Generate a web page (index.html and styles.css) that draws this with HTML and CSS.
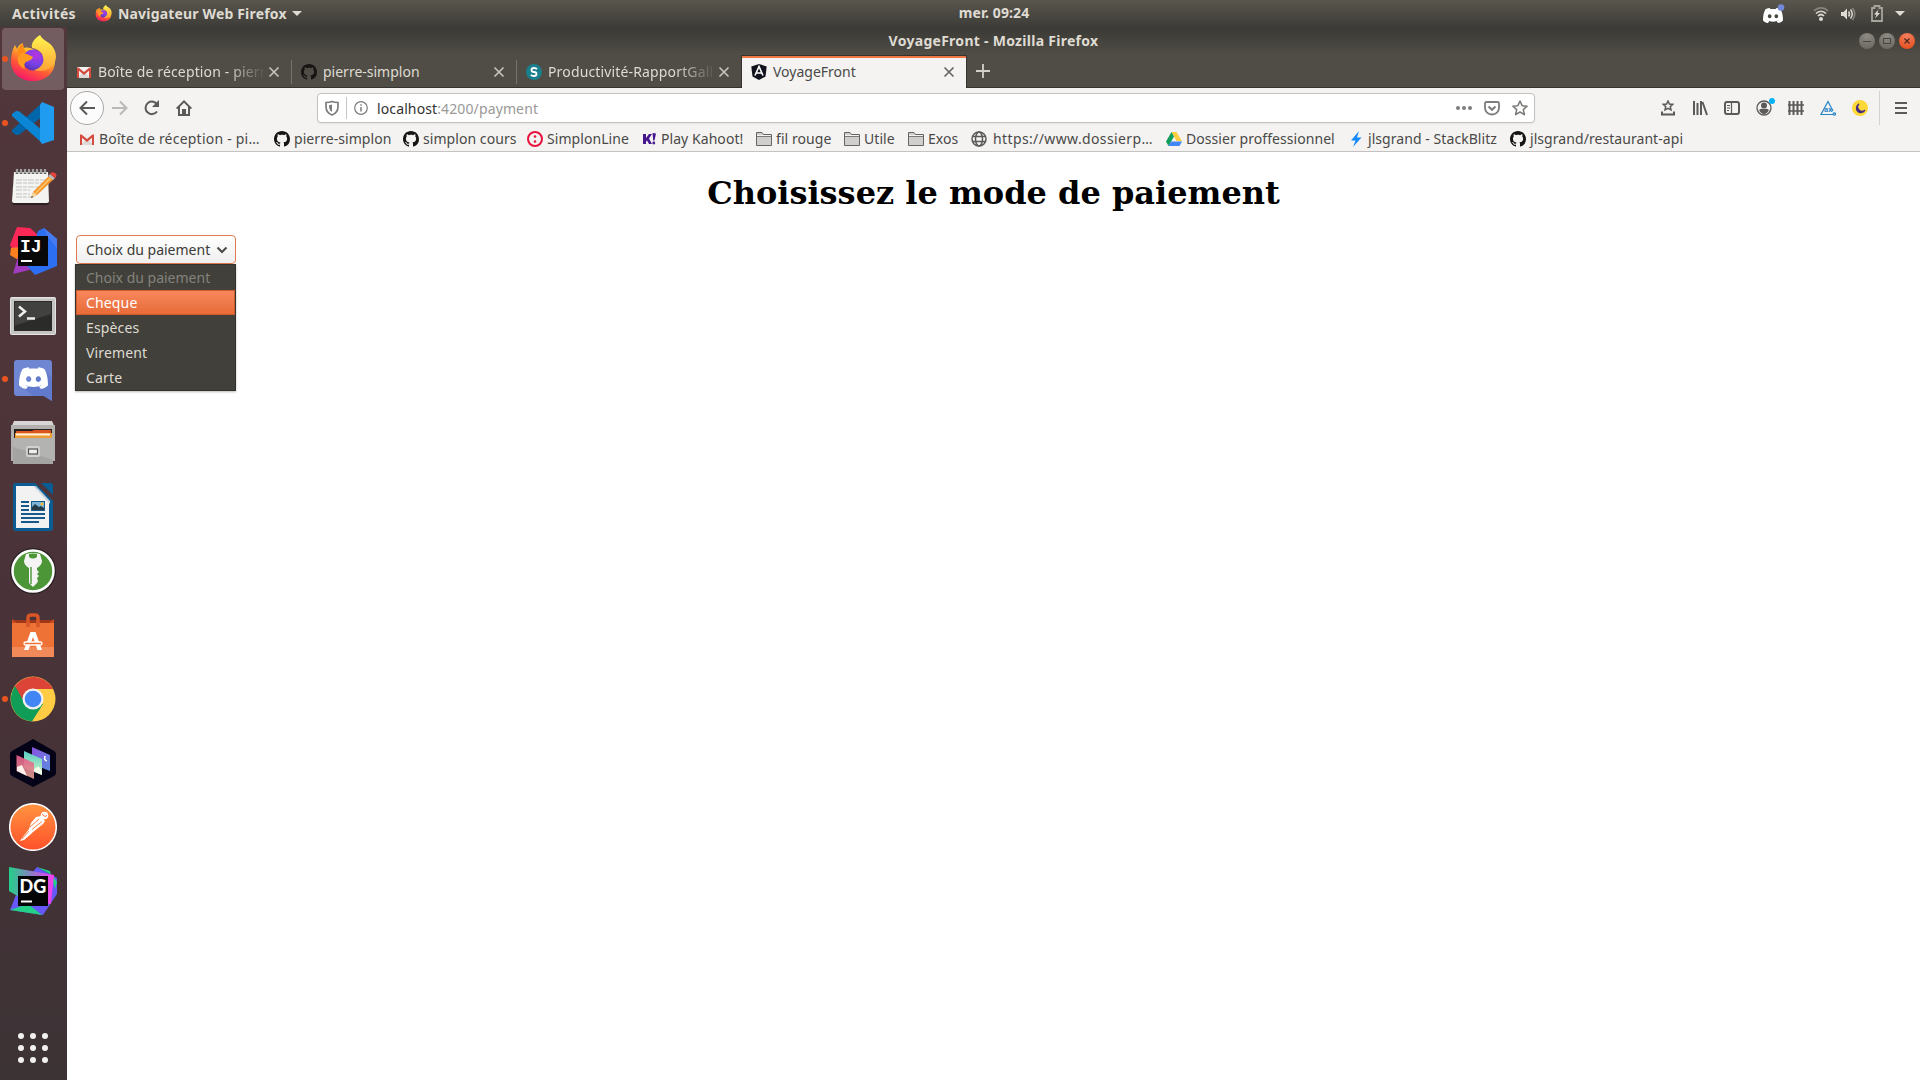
FILE: index.html
```html
<!DOCTYPE html>
<html lang="fr">
<head>
<meta charset="utf-8">
<title>VoyageFront</title>
<link rel="stylesheet" href="styles.css">
</head>
<body>
<svg class="defs" width="0" height="0" aria-hidden="true">
  <defs>
    <linearGradient id="ffBody" x1=".8" y1="0" x2=".3" y2="1"><stop offset="0" stop-color="#fff44f"/><stop offset=".35" stop-color="#ffb32c"/><stop offset=".65" stop-color="#ff5a36"/><stop offset="1" stop-color="#f5156c"/></linearGradient>
    <linearGradient id="ffFlame" x1="0" y1="0" x2="0" y2="1"><stop offset="0" stop-color="#fff44f"/><stop offset="1" stop-color="#ffa436"/></linearGradient>
    <radialGradient id="ffGlobe" cx=".65" cy=".25" r=".8"><stop offset="0" stop-color="#b833e1"/><stop offset=".6" stop-color="#7542e5"/><stop offset="1" stop-color="#5b2fb0"/></radialGradient>
    <symbol id="firefox" viewBox="0 0 48 48">
      <path d="M4 14l2-4 2 4c1-3 3-5 6-6c0 2 0 3 1 5c4-1 7 0 11 2l7 5l8-6c3 4 5 8 5 12c0 12-9 20-22 20S2 38 2 26c0-5 1-8 2-12z" fill="url(#ffBody)"/>
      <circle cx="24" cy="25" r="10.500" fill="url(#ffGlobe)"/>
      <path d="M31 0c-6 4-9 8-8 13c7 1 12 6 12 12c-1 5-5 9-10 10c10 3 21-1 22-13c0-6-3-11-7-14c-3-2-7-4-9-8z" fill="url(#ffFlame)"/>
      <path d="M9 22c2-4 6-4 9-3c2 1 4 2 6 3c-1 3-5 4-7 5c-2 1-2 4-1 7c-5-2-8-6-7-12z" fill="#ff9a21"/>
      <path d="M14 8c-4 3-6 7-5 14c2-4 5-5 8-4c-2-3-3-6-3-10z" fill="#ff8a16"/>
    </symbol>
    <symbol id="github" viewBox="0 0 16 16"><path fill="#161514" fill-rule="evenodd" d="M8 0C3.58 0 0 3.58 0 8c0 3.54 2.29 6.53 5.47 7.59.4.07.55-.17.55-.38 0-.19-.01-.82-.01-1.49-2.01.37-2.53-.49-2.69-.94-.09-.23-.48-.94-.82-1.13-.28-.15-.68-.52-.01-.53.63-.01 1.08.58 1.23.82.72 1.21 1.87.87 2.33.66.07-.52.28-.87.51-1.07-1.78-.2-3.64-.89-3.64-3.95 0-.87.31-1.59.82-2.15-.08-.2-.36-1.02.08-2.12 0 0 .67-.21 2.2.82.64-.18 1.32-.27 2-.27s1.36.09 2 .27c1.53-1.04 2.2-.82 2.2-.82.44 1.1.16 1.92.08 2.12.51.56.82 1.27.82 2.15 0 3.07-1.87 3.75-3.65 3.95.29.25.54.73.54 1.48 0 1.07-.01 1.93-.01 2.2 0 .21.15.46.55.38A8.01 8.01 0 0 0 16 8c0-4.42-3.58-8-8-8z"/></symbol>
    <symbol id="gmail" viewBox="0 0 16 16"><path d="M1 3h14v11H1z" fill="#f3f1f0"/><path d="M3 12l5-4 5 4v2H3z" fill="#dcd9d8"/><path d="M1 14V3.500h1.500L8 8l5.500-4.500H15V14h-2V6.800L8 11 3 6.800V14z" fill="#d54c3f"/></symbol>
    <symbol id="folder" viewBox="0 0 16 16"><path d="M.5 14.500V1.500H6l1.500 2h8v11z" fill="#d0cfcd" stroke="#66645f"/><path d="M1 4.500h14" stroke="#f4f3f2"/><path d="M1 5.500h14" stroke="#66645f" stroke-width=".8"/></symbol>
    <symbol id="close" viewBox="0 0 12 12"><path d="M1.500 1.500l9 9M10.500 1.500l-9 9" stroke="currentColor" stroke-width="1.600" fill="none"/></symbol>
    <symbol id="discord" viewBox="0 0 24 18"><path fill="#fff" fill-rule="evenodd" d="M8 0C5 .4 3 1.500 3 1.500C1 5 0 9 0 15c2 2.500 5 3 6 3l1.500-2.200C6 15.500 5 14.500 5 14.500c4 2.500 10 2.500 14 0c0 0-1 1-2.500 1.300L18 18c1 0 4-.5 6-3c0-6-1-10-3-13.500C21 1.500 19 .4 16 0l-.7 1.300C13 1 11 1 8.700 1.300zM8 7.500a2.200 2.400 0 1 0 .01 0zm8 0a2.200 2.400 0 1 0 .01 0z"/></symbol>
    <radialGradient id="btnGrey" cx=".5" cy=".2" r=".8"><stop offset="0" stop-color="#8d8b84"/><stop offset="1" stop-color="#6b6962"/></radialGradient>
    <radialGradient id="btnRed" cx=".5" cy=".2" r=".8"><stop offset="0" stop-color="#f58061"/><stop offset="1" stop-color="#e4501f"/></radialGradient>
  </defs>
</svg>

<header class="topbar">
  <div class="topbar-left">
    <span class="activities">Activités</span>
    <svg width="17" height="17"><use href="#firefox"/></svg>
    <span class="app-name">Navigateur Web Firefox</span>
    <svg class="caret" width="10" height="5"><path d="M0 0h10L5 5z" fill="#dfdbd2"/></svg>
  </div>
  <span class="clock">mer. 09:24</span>
  <div class="tray">
    <svg class="tray-discord" width="22" height="20" viewBox="0 0 22 20"><use href="#discord" x="0" y="4" width="20" height="15"/><circle cx="18" cy="3.500" r="3.300" fill="#7289da"/></svg>
    <svg class="tray-wifi" width="16" height="16" viewBox="0 0 16 16" fill="none" stroke-width="1.700"><path d="M1 5c4-4.300 10-4.300 14 0" stroke="#86847d"/><path d="M3 7.500c3-3 7-3 10 0M5 10c2-2 4-2 6 0" stroke="#dfdbd2"/><circle cx="8" cy="13" r="2" fill="#dfdbd2"/></svg>
    <svg class="tray-sound" width="16" height="16" viewBox="0 0 16 16" fill="none" stroke="#dfdbd2" stroke-width="1.500"><path d="M1 6h2.500L7 2.500v11L3.500 10H1z" fill="#dfdbd2" stroke="none"/><path d="M8.500 5.500q2 2.500 0 5M10.500 3.500q3.500 4.500 0 9"/><path d="M12.500 2q4.500 6 0 12" stroke="#86847d"/></svg>
    <svg class="tray-battery" width="12" height="17" viewBox="0 0 12 17"><path d="M1 3h2.500V1h5v2H11v13H1z" fill="none" stroke="#a7a49c" stroke-width="1.800"/><path d="M7.500 4.500L3 9.500h2.500L4 13.500l5-5.500H6.500z" fill="#dfdbd2"/></svg>
    <svg width="10" height="5"><path d="M0 0h10L5 5z" fill="#dfdbd2"/></svg>
  </div>
</header>

<div class="workspace">
<nav class="dock">
  <div class="dock-item active running"><svg width="48" height="48"><use href="#firefox"/></svg></div>
  <div class="dock-item running"><svg width="48" height="48" viewBox="0 0 48 48"><path d="M33 4L3 31v2l4 3 3-.2L33 18z" fill="#0065a9"/><path d="M33 44L3 17v-2l4-3 3 .2L33 31z" fill="#0a86d4"/><path d="M33 3l12 5v33l-12 4-2-3V6z" fill="#1f9cf0"/></svg></div>
  <div class="dock-item"><svg width="48" height="48" viewBox="0 0 48 48"><path d="M5 11h34l1 29q0 2-2 2H5q-2 0-2-2z" fill="#2d2024"/><path d="M5 9h34l1 29q0 2-2 2H5q-2 0-2-2z" fill="#f4f4f2"/><path d="M7 17h30M7 20h28M7 24h22M7 27h14M7 31h14M7 34h18" stroke="#c3c3c3" stroke-dasharray="6 1 4 1"/><path d="M8 6v5M12 6v5M16 6v5M20 6v5M24 6v5M28 6v5M32 6v5M36 6v5" stroke="#666" stroke-width="2.600"/><path d="M8 6v4M12 6v4M16 6v4M20 6v4M24 6v4M28 6v4M32 6v4M36 6v4" stroke="#ddd"/><path d="M24 29L41 12l4 4-17 16-6 3z" fill="#f1922c"/><path d="M25.500 30L42 13l1.500 1.500L27 31z" fill="#ffc05a"/><path d="M24 29l4 3-6 3z" fill="#f3d9a8"/><path d="M22 35l1-2 1 1z" fill="#222"/><path d="M39 13l2-2 5 4-2 2z" fill="#b8b8b8"/><path d="M41 11c1-2 3-2 5-1s2 4 0 5z" fill="#e2453a"/></svg></div>
  <div class="dock-item"><svg width="48" height="48" viewBox="0 0 48 48"><path d="M8 0l13 1 8 7v12L10 36 1 18z" fill="#fe2857"/><path d="M2 21l9-1v14l-10-6z" fill="#fc801d"/><path d="M10 26L4 47l24-6z" fill="#a13bbf"/><path d="M29 4l6-3 13 11v27L26 48l-8-9z" fill="#2d6ff2"/><path d="M35 1l13 11v9L38 9z" fill="#477cf0"/><path d="M9 9h30v30H9z" fill="#080808"/><path d="M12 34h11" stroke="#fff" stroke-width="2"/><text x="11" y="25" class="logo-mono" fill="#fff">IJ</text></svg></div>
  <div class="dock-item"><svg width="48" height="48" viewBox="0 0 48 48"><rect x="1" y="6" width="46" height="38" rx="2" fill="#e4e4e2"/><rect x="2" y="7.500" width="44" height="35.500" rx="1" fill="#c4c4c2"/><rect x="5" y="10" width="38" height="30" fill="#2b2b2a"/><path d="M6 11h36v12L6 34.500z" fill="#414140"/><path d="M10 15.500l6 5-6 5" fill="none" stroke="#eee" stroke-width="2.500"/><path d="M18 27.500h8" stroke="#eee" stroke-width="2.500"/></svg></div>
  <div class="dock-item running"><svg width="48" height="48" viewBox="0 0 48 48"><path d="M8 5h32q3 0 3 3v38l-8-5H8q-3 0-3-3V8q0-3 3-3z" fill="#6f86d2"/><path d="M36 16l7 7v23l-8-5H24L13 32z" fill="#617acb"/><use href="#discord" x="10" y="12" width="29" height="22"/></svg></div>
  <div class="dock-item"><svg width="48" height="48" viewBox="0 0 48 48"><path d="M5 2h38l3 7H2z" fill="#d8d5d7"/><path d="M2 6h44v36H2z" fill="#b2b0ae"/><path d="M5 10h38v9H5z" fill="#24211f"/><path d="M7 12h16l2-1h17v8H7z" fill="#d9541e"/><path d="M6 14h37v5H6z" fill="#ef9b35"/><path d="M7 15.500h34" stroke="#fff2dc" stroke-width="2"/><path d="M4 19h40v26H4z" fill="#a4a4a2"/><path d="M4 19h40v22L4 28z" fill="#b3b3b1"/><rect x="17" y="27" width="14" height="11" rx="2" fill="#d2d2d0"/><rect x="19.500" y="30" width="9" height="5" fill="#eee" stroke="#555" stroke-width="1.200"/></svg></div>
  <div class="dock-item"><svg width="48" height="48" viewBox="0 0 48 48"><path d="M6 0h20l18 18v27q0 3-3 3H7q-3 0-3-3V3q0-3 2-3z" fill="#0b5c93"/><path d="M32 0h9q3 0 3 3v9z" fill="#0b5c93"/><path d="M7 3h18l15 16v26H7z" fill="#f2f2f2"/><path d="M25 3h2l14 15v3z" fill="#c9d3da"/><path d="M12 19h8M12 23h8M12 27h8M12 31h24M12 35h24M12 39h18" stroke="#165a8b" stroke-width="2"/><path d="M22 18h14v10H22z" fill="#165a8b"/><path d="M23 19h12v8H23z" fill="#7bb5d8"/><path d="M23 27v-3l3-3 4 3 2-1 3 2v2z" fill="#253b46"/><circle cx="33" cy="21" r="1.500" fill="#fdbb30"/></svg></div>
  <div class="dock-item"><svg width="48" height="48" viewBox="0 0 48 48"><circle cx="24" cy="24" r="23" fill="#241d1f"/><circle cx="24" cy="24" r="20.500" fill="#4c9637" stroke="#fff" stroke-width="2.500"/><path fill-rule="evenodd" fill="#f4f4f4" d="M17 7q7-2 14 0l2 7q0 4-5 7v2l2 2-2 2 2 2-2 2 1 3-1 2-4 4-4-4V21q-5-3-5-7zM20 7q4-1 8 0v3q-4 3-8 0z"/><path d="M22 20v17" stroke="#579b42" stroke-width="1.500"/></svg></div>
  <div class="dock-item"><svg width="48" height="48" viewBox="0 0 48 48"><path d="M3 9h42v8H3z" fill="#9f3618"/><path d="M3 8l5 4h32l5-4v6H3z" fill="#c94b20"/><path d="M3 12h42v34H3z" fill="#ee7236"/><path d="M3 36h42v10H3z" fill="#f18a58"/><path d="M19 16V7q0-3 3-3h4q3 0 3 3v9" fill="none" stroke="#d85526" stroke-width="3.500"/><path d="M15 39l6.500-18h5L33 39h-4.500L24 26l-4.500 13z" fill="#fff"/><rect x="15" y="31" width="18" height="3" rx="1.500" fill="#ee7236" stroke="#fff" stroke-width="1.300"/></svg></div>
  <div class="dock-item running"><svg width="48" height="48" viewBox="0 0 48 48"><circle cx="24" cy="24" r="22.500" fill="#fc4"/><path d="M24 24L6 11A22.500 22.500 0 0 0 23 46.500L34 29z" fill="#0f9d58"/><path d="M24 14h20A22.500 22.500 0 0 0 6 11l8 14z" fill="#db4437"/><circle cx="24" cy="24" r="10.500" fill="#f1f1f1"/><circle cx="24" cy="24" r="8.300" fill="#4285f4"/></svg></div>
  <div class="dock-item"><svg width="48" height="48" viewBox="0 0 48 48"><defs><linearGradient id="panelA" x2="1" y2="1"><stop stop-color="#8a51e0"/><stop offset="1" stop-color="#5c8de0"/></linearGradient><linearGradient id="panelB" x2="0" y2="1"><stop stop-color="#58cfc6"/><stop offset="1" stop-color="#cdf0c0"/></linearGradient><linearGradient id="panelC" x2="0" y2="1"><stop stop-color="#e8588c"/><stop offset="1" stop-color="#d9a08c"/></linearGradient></defs><path d="M24 0l21 12q2 1 2 3v19q0 2-2 3L24 48 3 37q-2-1-2-3V15q0-2 2-3z" fill="#030216"/><path d="M23 8l18 8v16l-18-7z" fill="url(#panelA)"/><path d="M36 17q-1 4 2 5-4 0-2-5z" fill="#fff" stroke="#fff"/><path d="M15 12l18 8v16l-18-7z" fill="url(#panelB)"/><path d="M24 32q4-5 6-4l3 4v4z" fill="#f4faea"/><path d="M7.500 16L25 24v16L7.500 32z" fill="url(#panelC)" fill-opacity=".93"/><path d="M8 28l5-2 5 11-10-5z" fill="#fff0ec"/></svg></div>
  <div class="dock-item"><svg width="48" height="48" viewBox="0 0 48 48"><defs><linearGradient id="pm" x2="0" y2="1"><stop stop-color="#ff9440"/><stop offset="1" stop-color="#ff502a"/></linearGradient></defs><circle cx="24" cy="24" r="23.300" fill="url(#pm)" stroke="#fff" stroke-width="1.500"/><circle cx="35.500" cy="12.500" r="3.800" fill="#fff"/><path d="M27 14l5-1 4 5-2 3-10 8-3 3-6 5-4 1 2-3 7-9 2-6z" fill="#fff"/><path d="M30 16l-9 8M33 18.500l-10 8M20 28l-7 8" stroke="#ff7437" stroke-width=".9"/><path d="M33 11l3 2.500 2-1" stroke="#ff7437" fill="none"/></svg></div>
  <div class="dock-item"><svg width="48" height="48" viewBox="0 0 48 48"><defs><linearGradient id="dg"><stop stop-color="#22d088"/><stop offset=".55" stop-color="#9775cc"/><stop offset="1" stop-color="#fb3bec"/></linearGradient></defs><path d="M28 0l20 11v16l-14 21L1 43l8-20z" fill="#6657f8"/><path d="M28 0l13 4 5 18 2-7-5-7z" fill="#22d088"/><path d="M1 43l18-6 14 11z" fill="#22d088"/><path d="M0 0l45 8-3 29-25-3L0 24z" fill="url(#dg)"/><path d="M9 9h30v30H9z" fill="#050505"/><path d="M12 34.500h11" stroke="#fff" stroke-width="2"/><text x="10.500" y="25.500" class="logo-sans" fill="#fff">DG</text></svg></div>
  <div class="dock-apps"><i></i><i></i><i></i><i></i><i></i><i></i><i></i><i></i><i></i></div>
</nav>

<section class="window">
  <div class="titlebar">
    <span class="window-title">VoyageFront - Mozilla Firefox</span>
    <div class="window-buttons">
      <svg width="16" height="16"><circle cx="8" cy="8" r="8" fill="url(#btnGrey)"/><path d="M4 8.500h8" stroke="#45443f"/></svg>
      <svg width="16" height="16"><circle cx="8" cy="8" r="8" fill="url(#btnGrey)"/><path d="M4.500 5.500h7v5h-7z" fill="none" stroke="#45443f"/></svg>
      <svg width="16" height="16"><circle cx="8" cy="8" r="8" fill="url(#btnRed)"/><path d="M5.500 5.500l5 5M10.500 5.500l-5 5" stroke="#53291c" stroke-width="1.300"/></svg>
    </div>
  </div>
  <div class="tabs">
    <div class="tab"><svg width="16" height="16"><use href="#gmail"/></svg><span class="tab-label fade">Boîte de réception - pierr</span><svg class="tab-close" width="12" height="12"><use href="#close"/></svg></div>
    <div class="tab"><svg width="16" height="16"><use href="#github"/></svg><span class="tab-label">pierre-simplon</span><svg class="tab-close" width="12" height="12"><use href="#close"/></svg></div>
    <div class="tab"><svg width="16" height="16" viewBox="0 0 16 16"><circle cx="8" cy="8" r="8" fill="#1a7f8c"/><path d="M11 5.200Q10 4 8 4 5.500 4 5.500 6T8 8t2.500 2T8 12Q6 12 4.800 10.800" fill="none" stroke="#fff" stroke-width="1.800"/></svg><span class="tab-label fade">Productivité-RapportGall</span><svg class="tab-close" width="12" height="12"><use href="#close"/></svg></div>
    <div class="tab selected"><svg width="16" height="16" viewBox="0 0 16 16"><path d="M8 0l7.700 2.500-1.200 10L8 16l-6.500-3.500L.3 2.500z" fill="#10131c"/><path d="M4 11.500L8 2.500l4 9M5.500 9h5" fill="none" stroke="#fff" stroke-width="1.600"/></svg><span class="tab-label">VoyageFront</span><svg class="tab-close" width="12" height="12"><use href="#close"/></svg></div>
    <svg class="new-tab" width="14" height="14"><path d="M7 0v14M0 7h14" stroke="#d3d0c8" stroke-width="1.800"/></svg>
  </div>
  <div class="toolbar">
    <div class="nav-buttons">
      <span class="back"><svg width="16" height="16" fill="none" stroke="#5b5a58" stroke-width="2"><path d="M16 8H1.500M8 1.500L1.500 8 8 14.500"/></svg></span>
      <svg width="16" height="16" fill="none" stroke="#bab9b7" stroke-width="2"><path d="M0 8h14.500M8 1.500L14.500 8 8 14.500"/></svg>
      <svg width="16" height="16" fill="none" stroke="#5b5a58" stroke-width="2"><path d="M13 11.500A6.300 6.300 0 1 1 13.500 5"/><path d="M15 0v7H8z" fill="#5b5a58" stroke="none"/></svg>
      <svg width="16" height="16"><path d="M8 0l8 8-1.300 1.300L14 8.600V16H2V8.600l-.7.7L0 8zM8 2.800L4 6.800V14h2V9h4v5h2V6.800z" fill="#5b5a58" fill-rule="evenodd"/><path d="M8 10h1v2H8z" fill="#5b5a58"/></svg>
    </div>
    <div class="urlbar">
      <svg width="14" height="16" viewBox="0 0 14 16"><path d="M7 1.500c2 .8 4 1 6 1v4C13 11 10.500 13.800 7 15C3.500 13.800 1 11 1 6.500v-4c2 0 4-.2 6-1z" fill="none" stroke="#7d7c7a" stroke-width="1.700"/><path d="M7 4.500v7.500C4.800 10.500 4 9 4 5.200z" fill="#7d7c7a"/></svg>
      <i class="url-sep"></i>
      <svg width="14" height="14" viewBox="0 0 14 14"><circle cx="7" cy="7" r="6.300" fill="none" stroke="#7d7c7a" stroke-width="1.200"/><path d="M7 6v4.500M7 3.200v1.600" stroke="#7d7c7a" stroke-width="1.500"/></svg>
      <span class="url"><b>localhost</b>:4200/payment</span>
      <svg width="16" height="16" fill="#7d7c7a"><circle cx="2" cy="8" r="2"/><circle cx="8" cy="8" r="2"/><circle cx="14" cy="8" r="2"/></svg>
      <svg width="16" height="16" fill="none" stroke="#7d7c7a" stroke-width="1.800"><path d="M2.500 2h11q1.500 0 1.500 1.500V8a7 6.500 0 0 1-14 0V3.500Q1 2 2.500 2z"/><path d="M4.500 6.500L8 9.800l3.500-3.300" stroke-width="2"/></svg>
      <svg width="16" height="16" fill="none" stroke="#7d7c7a" stroke-width="1.600" stroke-linejoin="round"><path d="M8 1l2.100 4.700 5 .5-3.800 3.400 1.100 5L8 12l-4.400 2.600 1.100-5L.9 6.200l5-.5z"/></svg>
    </div>
    <div class="tool-icons">
      <svg width="16" height="16" fill="none" stroke="#5b5a58"><path d="M8 1l1.400 3 3.300.4-2.400 2.200.7 3.300L8 8.300 5 9.900l.7-3.300-2.400-2.200L6.600 4z" stroke-width="1.500"/><path d="M2 11.500v3h12v-3" stroke-width="2"/></svg>
      <svg width="16" height="16" stroke="#5b5a58" stroke-width="2"><path d="M2 1v14M5.500 3v12M9 1v14M10.500 2l4.500 13"/></svg>
      <svg width="16" height="16" fill="none" stroke="#5b5a58"><rect x="1" y="2" width="14" height="12" rx="2" stroke-width="2"/><path d="M7.500 2v12M3 5.500h3M3 8h3M3 10.500h2" stroke-width="1.200"/></svg>
      <svg class="account" width="22" height="22" viewBox="0 0 22 22"><circle cx="8" cy="14" r="7" fill="none" stroke="#5b5a58" stroke-width="1.300"/><circle cx="8" cy="11.500" r="3" fill="#5b5a58"/><path d="M3 16q2-2 5-1 3-1 5 1-2 4-5 4t-5-4z" fill="#5b5a58"/><circle cx="16" cy="7" r="3" fill="#00b3f4"/></svg>
      <svg width="16" height="16" stroke="#5b5a58"><path d="M1.500 1v14M5.500 1v14M9.500 1v14M13.500 1v14" stroke-width="2"/><path d="M0 5h16M0 11h16" stroke-width="1.300"/></svg>
      <svg width="16" height="16" fill="none" stroke="#2584c6" stroke-width="1.200"><path d="M13 14.500H1L8 1.500l5 9.500"/><circle cx="14.300" cy="14" r="1.200" fill="#fff"/><text x="4" y="12" class="axe" fill="#2584c6" stroke="none">ax</text></svg>
      <svg width="16" height="16"><circle cx="8" cy="8" r="8" fill="#fcd838"/><path d="M7 4a4.500 4.500 0 1 0 6 6a4 4 0 0 1-6-6z" fill="#442a83" stroke="#442a83" stroke-width="1.200"/></svg>
    </div>
    <i class="menu-sep"></i>
    <svg class="menu" width="12" height="14"><path d="M0 2h12M0 7h12M0 12h12" stroke="#5b5a58" stroke-width="2"/></svg>
  </div>
  <div class="bookmarks">
    <span class="loose"><svg width="16" height="16"><use href="#gmail"/></svg><em>Boîte de réception - pi…</em></span>
    <span><svg width="16" height="16"><use href="#github"/></svg><em>pierre-simplon</em></span>
    <span><svg width="16" height="16"><use href="#github"/></svg><em>simplon cours</em></span>
    <span><svg width="16" height="16"><circle cx="8" cy="8" r="7" fill="none" stroke="#e8123c" stroke-width="2"/><circle cx="8" cy="5.500" r="1.300" fill="#e8123c"/><circle cx="8" cy="10.500" r="1.300" fill="#e8123c"/></svg><em>SimplonLine</em></span>
    <span><svg width="16" height="16" fill="#46178f"><path d="M2 3h3v4l3-4h3L8 7.500l3 5.500H8L6 9.500l-1 1V13H2zM11.500 2l3.500.5-1.500 7h-1.300z"/><circle cx="12.800" cy="12" r="1.400"/></svg><em>Play Kahoot!</em></span>
    <span><svg width="16" height="16"><use href="#folder"/></svg><em>fil rouge</em></span>
    <span><svg width="16" height="16"><use href="#folder"/></svg><em>Utile</em></span>
    <span><svg width="16" height="16"><use href="#folder"/></svg><em>Exos</em></span>
    <span class="link"><svg width="16" height="16" fill="none" stroke="#5b5a58" stroke-width="1.500"><circle cx="8" cy="8" r="7"/><ellipse cx="8" cy="8" rx="3.500" ry="7"/><path d="M1.500 5.500h13M1.500 10.500h13"/></svg><em>https://www.dossierp…</em></span>
    <span><svg width="16" height="16"><path d="M5.500 1h5l5.500 9h-5.500z" fill="#ffcd40"/><path d="M5.500 1L8 5.500 2.500 15 0 10.500z" fill="#0f9d58"/><path d="M5 10.500h11L13.500 15h-11z" fill="#4285f4"/></svg><em>Dossier proffessionnel</em></span>
    <span><svg width="16" height="16"><path d="M11 0L3 9.500h4.500L5 16l8.500-9.500H9z" fill="#1389fd"/></svg><em>jlsgrand - StackBlitz</em></span>
    <span><svg width="16" height="16"><use href="#github"/></svg><em>jlsgrand/restaurant-api</em></span>
  </div>
  <main class="page">
    <h1>Choisissez le mode de paiement</h1>
    <div class="select">
      <div class="select-box"><span>Choix du paiement</span><svg width="12" height="8"><path d="M1.500 1.500L6 6l4.500-4.500" fill="none" stroke="#4a4946" stroke-width="2"/></svg></div>
      <ul class="options">
        <li class="disabled">Choix du paiement</li>
        <li class="current">Cheque</li>
        <li>Espèces</li>
        <li>Virement</li>
        <li>Carte</li>
      </ul>
    </div>
  </main>
</section>
</div>
</body>
</html>
```
FILE: styles.css
```css
* { box-sizing: border-box; }
body { margin: 0; width: 1920px; height: 1080px; overflow: hidden; display: flex; flex-direction: column; font: 14px/20px "Noto Sans", sans-serif; color: #4a4947; background: #fff; }
svg { display: block; flex: none; }
.defs { position: absolute; }

.topbar { height: 27px; display: grid; grid-template-columns: 894px 200px 1fr; align-items: center; background: linear-gradient(#59564d, #3d3c38); color: #dfdbd2; font-weight: 700; }
.topbar-left { display: flex; align-items: center; padding-left: 12px; white-space: nowrap; }
.activities { width: 83px; letter-spacing: .35px; }
.app-name { width: 174px; padding-left: 6px; letter-spacing: .17px; }
.caret { margin-left: 6px; }
.clock { text-align: center; line-height: 18px; padding-bottom: 1px; letter-spacing: .1px; }
.tray { display: flex; align-items: center; justify-content: flex-end; padding-right: 15px; }
.tray-discord { margin-right: 28px; }
.tray-wifi { margin-right: 11px; }
.tray-sound { margin-right: 15px; }
.tray-battery { margin-right: 12px; }

.workspace { flex: 1; display: flex; min-height: 0; }
.dock { width: 67px; display: flex; flex-direction: column; background: linear-gradient(#51373b, #4c3439 45%, #443237 75%, #3c3335); }
.dock-item { height: 64px; display: flex; align-items: center; padding-left: 9px; position: relative; }
.dock-item.active::before { content: ""; position: absolute; left: 2px; top: 1px; width: 62px; height: 62px; border-radius: 4px; background: #745d60; }
.dock-item svg { position: relative; }
.dock-item.running::after { content: ""; position: absolute; left: 2px; top: 29px; width: 6px; height: 6px; border-radius: 50%; background: #e95420; }
.logo-mono { font: bold 18px "Liberation Mono", monospace; }
.logo-sans { font: 900 18px Lato, sans-serif; }
.axe { font: bold 7px "Noto Sans", sans-serif; }
.dock-apps { margin: auto 0 17px 18px; display: grid; grid-template-columns: repeat(3, 6px); gap: 6px; }
.dock-apps i { width: 6px; height: 6px; border-radius: 50%; background: #f2f1f0; }

.window { flex: 1; min-width: 0; display: flex; flex-direction: column; }
.titlebar { height: 28px; display: grid; grid-template-columns: 1fr auto 1fr; align-items: center; background: linear-gradient(#3a3935, #504d46); color: #dfdbd2; font-weight: 700; }
.window-title { grid-column: 2; letter-spacing: .28px; }
.window-buttons { display: flex; gap: 4px; justify-content: flex-end; padding-right: 5px; }
.tabs { height: 33px; display: flex; background: #504d46; border-bottom: 1px solid #34332f; color: #dfdbd2; }
.tab { width: 225px; height: 32px; display: flex; align-items: center; padding: 2px 12px 0 9px; position: relative; }
.tab + .tab::before { content: ""; position: absolute; left: -1px; top: 5px; width: 1px; height: 24px; background: #77746c; }
.tab-label { flex: 1; padding-left: 6px; white-space: nowrap; overflow: hidden; margin-right: 6px; }
.fade { letter-spacing: .15px; margin-right: 0; -webkit-mask-image: linear-gradient(90deg, #000 76%, transparent 99%); mask-image: linear-gradient(90deg, #000 76%, transparent 99%); }
.tab.selected { width: 226px; height: 33px; margin-left: -1px; padding: 1px 11px 0 9px; background: #f4f3f2; color: #4a4947; box-shadow: inset 0 1px #34332f, inset 0 3px #f07746; border: solid #34332f; border-width: 0 1px; }
.tab.selected::before { display: none; }
.tab-close { opacity: .85; }
.new-tab { margin: 9px; }

.toolbar { height: 40px; background: #f4f3f2; display: flex; align-items: center; padding-left: 3px; }
.nav-buttons { display: flex; align-items: center; gap: 16px; width: 247px; }
.back { width: 34px; height: 34px; border: 1px solid #a9a8a6; border-radius: 50%; background: #fcfcfc; display: grid; place-items: center; margin-right: -8px; }
.urlbar { width: 1218px; height: 30px; display: flex; align-items: center; gap: 12px; padding: 0 6px 0 7px; border: 1px solid #c5c3c0; border-radius: 4px; background: #fff; box-shadow: 0 1px 2px #0001; }
.url-sep { width: 1px; height: 22px; background: #c8c7c5; margin: 0 -5px 0 -5px; }
.url { flex: 1; color: #9a9997; margin-left: -3px; padding-top: 1px; letter-spacing: .12px; }
.url b { font-weight: 400; color: #33322f; }
.tool-icons { display: flex; align-items: center; gap: 16px; margin-left: 125px; }
.account { margin: -6px -6px 0 0; }
.menu-sep { width: 1px; height: 34px; background: #d3d2d0; margin-left: 11px; }
.menu { margin-left: 15px; }

.bookmarks { height: 24px; padding: 0 0 1px 12px; background: #f4f3f2; border-bottom: 1px solid #c3c2c0; display: grid; align-items: center; grid-template-columns: 195px 129px 124px 114px 115px 88px 64px 63px 195px 182px 162px 200px; }
.bookmarks span { display: flex; align-items: center; white-space: nowrap; }
.bookmarks em { font-style: normal; margin-left: 4px; letter-spacing: .06px; }
.bookmarks .loose em { letter-spacing: .22px; }
.bookmarks .link em { letter-spacing: .38px; margin-left: 6px; }

.page { flex: 1; padding: 0 8px; overflow: hidden; }
h1 { font: bold 32px/37px "DejaVu Serif", serif; color: #000; margin: 22.500px 0 23.500px; text-align: center; }
.select { width: 161px; }
.select-box { height: 29px; display: flex; align-items: center; justify-content: space-between; margin-left: 1px; padding: 0 7px 0 9px; border: 1px solid #e07a52; border-radius: 4px; background: linear-gradient(#fff, #f0efee); color: #3c3b37; }
.options { list-style: none; margin: 0; padding: 1px; background: #41403a; box-shadow: inset 0 0 0 1px #33322d, 0 1px 2px #0004; color: #dfdbd2; letter-spacing: .15px; }
.options li { height: 25px; padding-left: 10px; line-height: 26px; }
.options .disabled { color: #84837d; letter-spacing: 0; }
.options .current { background: linear-gradient(#f9885c, #e66a37); box-shadow: inset 0 0 0 1px #cf5a2b; color: #fff; }
```
